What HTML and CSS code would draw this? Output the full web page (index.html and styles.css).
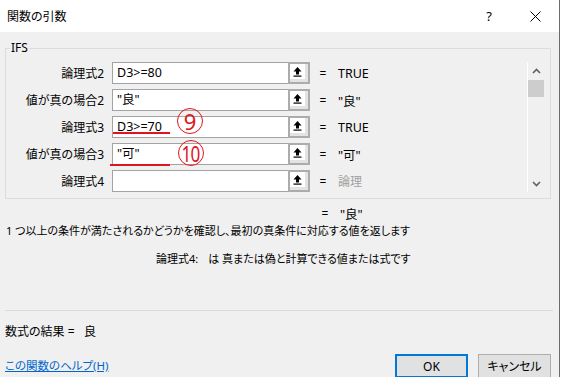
FILE: index.html
```html
<!doctype html>
<html>
<head>
<meta charset="utf-8">
<title>関数の引数</title>
<link rel="stylesheet" href="styles.css">
</head>
<body>
<div class="dialog">
  <div class="titlebar">
    <span class="title">関数の引数</span>
    <span class="help-btn">?</span>
    <span class="close-btn">
      <svg width="11" height="11" viewBox="0 0 11 11"><path d="M0.5 0.5L10.5 10.5M10.5 0.5L0.5 10.5" stroke="#000" stroke-width="1" fill="none"/></svg>
    </span>
  </div>

  <fieldset class="args">
    <legend>IFS</legend>
    <div class="arg-list">
      <div class="rows">
        <div class="row">
          <span class="label">論理式2</span>
          <span class="field">D3&gt;=80</span>
          <span class="ref"><span class="ref-face"><svg width="15" height="15" viewBox="0 0 15 15"><path d="M7.5 3L11.5 7.5H9V10.5H6V7.5H3.5Z" fill="#000"/><rect x="3.5" y="11.5" width="8" height="1.2" fill="#000"/></svg></span></span>
          <span class="eq">=</span>
          <span class="val">TRUE</span>
        </div>
        <div class="row">
          <span class="label">値が真の場合2</span>
          <span class="field">"良"</span>
          <span class="ref"><span class="ref-face"><svg width="15" height="15" viewBox="0 0 15 15"><path d="M7.5 3L11.5 7.5H9V10.5H6V7.5H3.5Z" fill="#000"/><rect x="3.5" y="11.5" width="8" height="1.2" fill="#000"/></svg></span></span>
          <span class="eq">=</span>
          <span class="val">"良"</span>
        </div>
        <div class="row">
          <span class="label">論理式3</span>
          <span class="field">D3&gt;=70</span>
          <span class="ref"><span class="ref-face"><svg width="15" height="15" viewBox="0 0 15 15"><path d="M7.5 3L11.5 7.5H9V10.5H6V7.5H3.5Z" fill="#000"/><rect x="3.5" y="11.5" width="8" height="1.2" fill="#000"/></svg></span></span>
          <span class="eq">=</span>
          <span class="val">TRUE</span>
          <span class="mark-line mark-line-9"></span>
          <span class="mark-num mark-num-9"><span class="digits">9</span></span>
        </div>
        <div class="row">
          <span class="label">値が真の場合3</span>
          <span class="field">"可"</span>
          <span class="ref"><span class="ref-face"><svg width="15" height="15" viewBox="0 0 15 15"><path d="M7.5 3L11.5 7.5H9V10.5H6V7.5H3.5Z" fill="#000"/><rect x="3.5" y="11.5" width="8" height="1.2" fill="#000"/></svg></span></span>
          <span class="eq">=</span>
          <span class="val">"可"</span>
          <span class="mark-line mark-line-10"></span>
          <span class="mark-num mark-num-10"><span class="digits">10</span></span>
        </div>
        <div class="row">
          <span class="label">論理式4</span>
          <span class="field"></span>
          <span class="ref"><span class="ref-face"><svg width="15" height="15" viewBox="0 0 15 15"><path d="M7.5 3L11.5 7.5H9V10.5H6V7.5H3.5Z" fill="#000"/><rect x="3.5" y="11.5" width="8" height="1.2" fill="#000"/></svg></span></span>
          <span class="eq">=</span>
          <span class="val val-hint">論理</span>
        </div>
      </div>
      <div class="scrollbar">
        <span class="arrow"><svg width="9" height="6" viewBox="0 0 9 6"><path d="M1 5L4.5 1.5L8 5" stroke="#606060" stroke-width="1.6" fill="none"/></svg></span>
        <span class="thumb"></span>
        <span class="arrow arrow-down"><svg width="9" height="6" viewBox="0 0 9 6"><path d="M1 1L4.5 4.5L8 1" stroke="#606060" stroke-width="1.6" fill="none"/></svg></span>
      </div>
    </div>
  </fieldset>

  <div class="summary">
    <span class="eq">=</span>
    <span class="val">"良"</span>
  </div>
  <p class="desc">1 つ以上の条件が満たされるかどうかを確認し、最初の真条件に対応する値を返します</p>
  <p class="arg-desc"><span class="arg-name">論理式4:</span>は 真または偽と計算できる値または式です</p>

  <div class="separator"></div>

  <p class="result">数式の結果 =&nbsp;&nbsp; 良</p>

  <div class="footer">
    <a class="help-link" href="#">この関数のヘルプ(H)</a>
    <span class="btn btn-ok">OK</span>
    <span class="btn btn-cancel">キャンセル</span>
  </div>
</div>
</body>
</html>
```

FILE: styles.css
```css
* {
  box-sizing: border-box;
}
html, body {
  margin: 0;
  padding: 0;
}
body {
  background: #fff;
  font-family: "Noto Sans", "Noto Sans CJK JP", sans-serif;
  font-size: 12px;
  color: #000;
  font-feature-settings: "palt";
  overflow: hidden;
}
p {
  margin: 0;
}

.dialog {
  width: 560px;
  height: 377px;
  background: #f0f0f0;
  border-right: 1px solid #6b6b6b;
}

/* title bar */
.titlebar {
  height: 32px;
  background: #fff;
  display: flex;
  align-items: center;
  padding-left: 7px;
}
.title {
  flex: 1;
  font-size: 12px;
}
.help-btn {
  width: 10px;
  text-align: center;
  font-size: 13px;
  margin-right: 36px;
}
.close-btn {
  display: flex;
  width: 11px;
  margin-right: 18px;
}

/* argument group */
.args {
  margin: 8px 0 0 5px;
  width: 546px;
  padding: 6px 6px 6px 0;
  border: 1px solid #dcdcdc;
  min-width: 0;
}
.args legend {
  margin-left: 4px;
  padding: 0 1px;
  font-size: 12px;
  line-height: 16px;
}
.arg-list {
  display: flex;
}
.rows {
  flex: 1;
  display: flex;
  flex-direction: column;
  gap: 5px;
}
.row {
  position: relative;
  display: flex;
  align-items: center;
  height: 22px;
}
.label {
  width: 98px;
  text-align: right;
}
.field {
  margin-left: 8px;
  width: 176px;
  height: 22px;
  line-height: 20px;
  padding-left: 4px;
  background: #fff;
  border: 1px solid #a3a3a3;
  border-right: none;
  font-size: 12.5px;
}
.ref {
  width: 22px;
  height: 22px;
  border: 2px solid #acacac;
  background: #e3e3e3;
}
.ref-face {
  display: flex;
  width: 15px;
  height: 15px;
  background: #fff;
}
.eq {
  margin-left: 8px;
  width: 10px;
  text-align: center;
}
.val {
  margin-left: 10px;
  font-size: 12.5px;
}
.val-hint {
  color: #a0a0a0;
  font-size: 12px;
}

/* red marks */
.mark-line {
  position: absolute;
  height: 2px;
  background: #e0141e;
}
.mark-line-9 {
  left: 107px;
  width: 57px;
  top: 16px;
}
.mark-line-10 {
  left: 104px;
  width: 60px;
  top: 21px;
}
.mark-num {
  position: absolute;
  display: flex;
  align-items: center;
  justify-content: center;
  width: 26px;
  height: 26px;
  border: 1.5px solid #e0141e;
  border-radius: 50%;
  color: #e0141e;
  font-size: 22px;
  line-height: 22px;
}
.digits {
  display: inline-block;
}
.mark-num-9 {
  left: 171px;
  top: -8px;
}
.mark-num-10 {
  left: 172px;
  top: -3px;
}
.mark-num-10 .digits {
  letter-spacing: -1px;
  transform: scaleX(0.78);
}

/* scrollbar */
.scrollbar {
  width: 17px;
  border-left: 1px solid #fff;
  display: flex;
  flex-direction: column;
}
.arrow {
  height: 17px;
  display: flex;
  align-items: center;
  justify-content: center;
}
.thumb {
  margin-top: 1px;
  height: 17px;
  background: #cdcdcd;
}
.arrow-down {
  margin-top: auto;
}

/* lower part */
.summary {
  display: flex;
  align-items: center;
  height: 18px;
  margin-top: 5px;
  padding-left: 312px;
}
.desc {
  height: 18px;
  line-height: 18px;
  padding-left: 6px;
  font-size: 11px;
}
.arg-desc {
  margin-top: 10px;
  height: 18px;
  line-height: 18px;
  padding-left: 156px;
  font-size: 11px;
}
.arg-name {
  margin-right: 10px;
}
.separator {
  margin: 42px 0 0 5px;
  width: 548px;
  height: 1px;
  background: #d9d9d9;
}
.result {
  margin-top: 12px;
  height: 18px;
  line-height: 18px;
  padding-left: 5px;
}
.footer {
  display: flex;
  align-items: flex-start;
  margin-top: 13px;
  padding-left: 5px;
}
.help-link {
  flex: 1;
  margin-top: 3px;
  color: #0066cc;
  font-size: 11.5px;
  text-decoration: underline;
}
.btn {
  width: 73px;
  height: 24px;
  display: flex;
  align-items: center;
  justify-content: center;
  background: #e1e1e1;
  border: 1px solid #adadad;
}
.btn-ok {
  border: 2px solid #0078d7;
}
.btn-cancel {
  margin-left: 10px;
  margin-right: 8px;
}
```
